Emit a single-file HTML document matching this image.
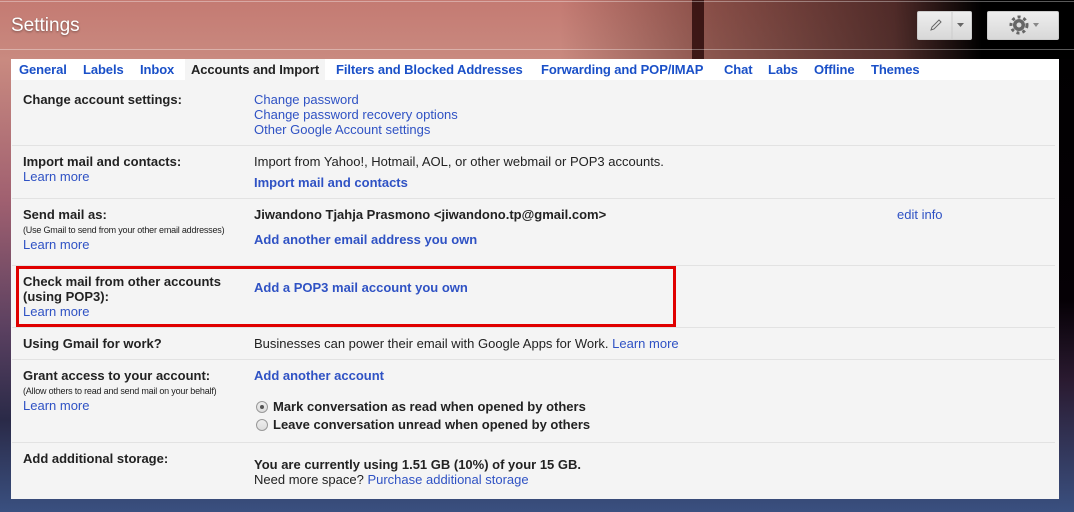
<!DOCTYPE html>
<html><head><style>
*{margin:0;padding:0;box-sizing:border-box}
body{width:1074px;height:512px;overflow:hidden;position:relative;font-family:"Liberation Sans",Arial,sans-serif;font-size:13px;color:#222;
background:linear-gradient(180deg,#c47a72 0px,#c98a80 60px,#a06070 200px,#5a4060 330px,#2a2a48 420px,#3a5080 512px);}
.bgr{position:absolute;left:1059px;top:0;width:15px;height:512px;background:linear-gradient(180deg,#000 0,#050005 300px,#2a1a30 380px,#3a5080 512px)}
.topr{position:absolute;left:560px;top:0;width:514px;height:59px;background:linear-gradient(90deg,rgba(60,20,15,0),rgba(60,20,15,.45) 30%,rgba(30,8,8,.7) 65%,#000 82%)}
.tree{position:absolute;left:692px;top:0;width:12px;height:59px;background:rgba(40,8,8,.8)}
.hl{position:absolute;left:0;width:1074px;height:1px;background:rgba(255,255,255,.35)}
.title{position:absolute;left:11px;top:15px;font-size:19px;color:#fff;text-shadow:0 1px 2px rgba(0,0,0,.4)}
.btn{position:absolute;top:11px;height:29px;border-radius:2px;background:linear-gradient(#eee,#d8d8d8);border:1px solid #ccc}
.tabs{position:absolute;left:11px;top:59px;width:1048px;height:21px;background:#fff}
.tabs span{position:absolute;top:3px;font-weight:bold;color:#1a50c8;font-size:13px;letter-spacing:-0.1px}
.tabs span.sel{color:#222;background:#f4f4f4;top:0;height:21px;padding:3px 6px 0;}
.panel{position:absolute;left:11px;top:80px;width:1048px;height:419px;background:#f4f4f4}
.sep{position:absolute;left:12px;width:1043px;height:1px;background:#e2e2e2}
.t{position:absolute;white-space:nowrap}
.b{font-weight:bold}
.a{color:#2f52c4}
.ab{color:#2f52c4;font-weight:bold}
.s{font-size:9px;color:#222;letter-spacing:-0.2px}
.red{position:absolute;left:16px;top:266px;width:660px;height:61px;border:3px solid #e00000}
.radio{position:absolute;width:12px;height:12px;border-radius:50%;border:1px solid #999;background:linear-gradient(#eee,#ddd)}
</style></head><body>
<div class="bgr"></div>
<div class="topr"></div>
<div class="tree"></div>
<div class="hl" style="top:1px"></div>
<div class="hl" style="top:49px"></div>
<div class="title">Settings</div>
<div class="btn" style="left:917px;width:55px">
<svg width="55" height="27" style="position:absolute;left:0;top:0"><path d="M13 18l1-3 7-7 2 2-7 7z" fill="none" stroke="#666" stroke-width="1"/><line x1="34" y1="0" x2="34" y2="27" stroke="#ccc"/><path d="M39 11h7l-3.5 4z" fill="#666"/></svg></div>
<div class="btn" style="left:987px;width:72px">
<svg width="72" height="27" style="position:absolute;left:0;top:0"><circle cx="31" cy="13" r="6" fill="#666"/><circle cx="31" cy="13" r="8" fill="none" stroke="#666" stroke-width="3" stroke-dasharray="3 3"/><circle cx="31" cy="13" r="2.5" fill="#ddd"/><path d="M45 11h6l-3 4z" fill="#888"/></svg></div>
<div class="tabs">
<span style="left:8px">General</span>
<span style="left:72px">Labels</span>
<span style="left:129px">Inbox</span>
<span class="sel" style="left:174px">Accounts and Import</span>
<span style="left:325px">Filters and Blocked Addresses</span>
<span style="left:530px">Forwarding and POP/IMAP</span>
<span style="left:713px">Chat</span>
<span style="left:757px">Labs</span>
<span style="left:803px">Offline</span>
<span style="left:860px">Themes</span>
</div>
<div class="panel"></div>
<div class="sep" style="top:145px"></div>
<div class="sep" style="top:198px"></div>
<div class="sep" style="top:265px"></div>
<div class="sep" style="top:327px"></div>
<div class="sep" style="top:359px"></div>
<div class="sep" style="top:442px"></div>

<div class="t b" style="left:23px;top:92px">Change account settings:</div>
<div class="t a" style="left:254px;top:92px">Change password</div>
<div class="t a" style="left:254px;top:107px">Change password recovery options</div>
<div class="t a" style="left:254px;top:122px">Other Google Account settings</div>

<div class="t b" style="left:23px;top:154px">Import mail and contacts:</div>
<div class="t a" style="left:23px;top:169px">Learn more</div>
<div class="t" style="left:254px;top:154px">Import from Yahoo!, Hotmail, AOL, or other webmail or POP3 accounts.</div>
<div class="t ab" style="left:254px;top:175px">Import mail and contacts</div>

<div class="t b" style="left:23px;top:207px">Send mail as:</div>
<div class="t s" style="left:23px;top:225px">(Use Gmail to send from your other email addresses)</div>
<div class="t a" style="left:23px;top:237px">Learn more</div>
<div class="t b" style="left:254px;top:207px">Jiwandono Tjahja Prasmono &lt;jiwandono.tp@gmail.com&gt;</div>
<div class="t a" style="left:897px;top:207px">edit info</div>
<div class="t ab" style="left:254px;top:232px">Add another email address you own</div>

<div class="t b" style="left:23px;top:274px">Check mail from other accounts</div>
<div class="t b" style="left:23px;top:289px">(using POP3):</div>
<div class="t a" style="left:23px;top:304px">Learn more</div>
<div class="t ab" style="left:254px;top:280px">Add a POP3 mail account you own</div>
<div class="red"></div>

<div class="t b" style="left:23px;top:336px">Using Gmail for work?</div>
<div class="t" style="left:254px;top:336px">Businesses can power their email with Google Apps for Work. <span class="a">Learn more</span></div>

<div class="t b" style="left:23px;top:368px">Grant access to your account:</div>
<div class="t s" style="left:23px;top:386px">(Allow others to read and send mail on your behalf)</div>
<div class="t a" style="left:23px;top:398px">Learn more</div>
<div class="t ab" style="left:254px;top:368px">Add another account</div>
<div class="radio" style="left:256px;top:401px"><div style="position:absolute;left:3px;top:3px;width:4px;height:4px;border-radius:50%;background:#555"></div></div>
<div class="t b" style="left:273px;top:399px">Mark conversation as read when opened by others</div>
<div class="radio" style="left:256px;top:419px"></div>
<div class="t b" style="left:273px;top:417px">Leave conversation unread when opened by others</div>

<div class="t b" style="left:23px;top:451px">Add additional storage:</div>
<div class="t b" style="left:254px;top:457px">You are currently using 1.51 GB (10%) of your 15 GB.</div>
<div class="t" style="left:254px;top:472px">Need more space? <span class="a">Purchase additional storage</span></div>
</body></html>
